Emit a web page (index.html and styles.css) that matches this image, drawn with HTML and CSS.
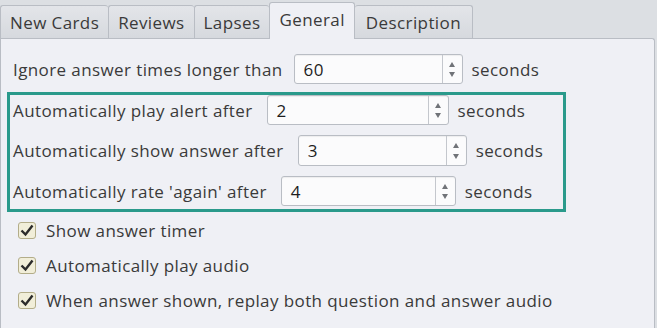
FILE: index.html
```html
<!DOCTYPE html>
<html lang="en">
<head>
    <meta charset="UTF-8">
    <title>Options</title>
    <link rel="stylesheet" href="styles.css">
</head>
<body>
    <div class="tabs">
        <div class="tab">New Cards</div>
        <div class="tab">Reviews</div>
        <div class="tab">Lapses</div>
        <div class="tab active">General</div>
        <div class="tab wide">Description</div>
    </div>

    <div class="pane">
        <div class="row first">
            <span class="label">Ignore answer times longer than</span>
            <div class="spin w169">
                <span class="value">60</span>
                <span class="arrows"><i class="up"></i><i class="down"></i></span>
            </div>
            <span class="unit">seconds</span>
        </div>

        <div class="auto-box">
            <div class="row">
                <span class="label">Automatically play alert after</span>
                <div class="spin w182">
                    <span class="value">2</span>
                    <span class="arrows"><i class="up"></i><i class="down"></i></span>
                </div>
                <span class="unit">seconds</span>
            </div>
            <div class="row">
                <span class="label">Automatically show answer after</span>
                <div class="spin w169">
                    <span class="value">3</span>
                    <span class="arrows"><i class="up"></i><i class="down"></i></span>
                </div>
                <span class="unit">seconds</span>
            </div>
            <div class="row">
                <span class="label">Automatically rate 'again' after</span>
                <div class="spin w175">
                    <span class="value">4</span>
                    <span class="arrows"><i class="up"></i><i class="down"></i></span>
                </div>
                <span class="unit">seconds</span>
            </div>
        </div>

        <div class="checks">
            <label class="check">
                <span class="box"><svg viewBox="0 0 18 17" width="18" height="17"><path d="M3.5 8.5 L7.5 12.5 L14.5 3.5" fill="none" stroke="#2b2b2b" stroke-width="2.4"/></svg></span>
                Show answer timer
            </label>
            <label class="check">
                <span class="box"><svg viewBox="0 0 18 17" width="18" height="17"><path d="M3.5 8.5 L7.5 12.5 L14.5 3.5" fill="none" stroke="#2b2b2b" stroke-width="2.4"/></svg></span>
                Automatically play audio
            </label>
            <label class="check">
                <span class="box"><svg viewBox="0 0 18 17" width="18" height="17"><path d="M3.5 8.5 L7.5 12.5 L14.5 3.5" fill="none" stroke="#2b2b2b" stroke-width="2.4"/></svg></span>
                When answer shown, replay both question and answer audio
            </label>
        </div>
    </div>
</body>
</html>
```

FILE: styles.css
```css
* {
    margin: 0;
    padding: 0;
    box-sizing: border-box;
}

html, body {
    height: 100vh;
    overflow: hidden;
}

body {
    background: #dcdfe3;
    font-family: "Open Sans", "DejaVu Sans", sans-serif;
    font-size: 17px;
    letter-spacing: 0.4px;
    color: #3a3a3a;
}

.tabs {
    display: flex;
    align-items: flex-end;
    height: 39px;
    position: relative;
    z-index: 2;
}

.tab {
    height: 33px;
    padding: 0 9px;
    display: flex;
    align-items: center;
    border: 1px solid #b9bdc4;
    border-bottom: none;
    border-right: none;
    border-radius: 3px 3px 0 0;
    background: linear-gradient(to bottom, #e3e5e9, #d6d9de);
    margin-bottom: 1px;
}

.tab.wide {
    padding: 0 11px;
}

.tab:last-child {
    border-right: 1px solid #b9bdc4;
}

.tab.active {
    height: 37px;
    margin-bottom: 0;
    background: #eff0f5;
    border-right: 1px solid #b9bdc4;
    margin-right: -1px;
    padding-bottom: 3px;
}

.tab.active + .tab {
    border-left: none;
    margin-left: 1px;
}

.pane {
    margin-top: -1px;
    height: calc(100vh - 38px);
    width: 655px;
    background: #eff0f5;
    border: 1px solid #b9bdc4;
    border-bottom: none;
    border-radius: 0 3px 0 0;
    padding: 15px 0 0 6px;
}

.row {
    display: flex;
    align-items: center;
    height: 30px;
}

.row.first {
    padding-left: 6px;
}

.label {
    margin-right: 11px;
}

.auto-box .label {
    margin-right: 14px;
}

.spin {
    height: 30px;
    display: flex;
    background: #fbfbfc;
    border: 1px solid #b9bdc4;
    border-radius: 3px;
    box-shadow: inset 0 1px 1px rgba(0, 0, 0, 0.06);
    margin-right: 9px;
}

.w169 { width: 169px; }
.w175 { width: 175px; }
.w182 { width: 182px; }

.spin .value {
    flex: 1;
    display: flex;
    align-items: center;
    padding-left: 9px;
    color: #1e1e1e;
}

.arrows {
    width: 20px;
    border-left: 1px solid #c4c7cd;
    display: flex;
    flex-direction: column;
    align-items: center;
    justify-content: space-between;
    padding: 7px 0 6px;
}

.arrows i {
    width: 0;
    height: 0;
    border-left: 3px solid transparent;
    border-right: 3px solid transparent;
}

.arrows .up {
    border-bottom: 5px solid #707378;
}

.arrows .down {
    border-top: 5px solid #707378;
}

.auto-box {
    margin-top: 8px;
    width: 559px;
    border: 3px solid #2a9a8b;
    padding: 0 0 3px 3px;
    display: flex;
    flex-direction: column;
    gap: 10px;
}

.auto-box .row:nth-child(2) {
    height: 31px;
}

.auto-box .row:nth-child(2) .spin {
    height: 31px;
}

.checks {
    display: flex;
    flex-direction: column;
    gap: 17px;
    padding: 9px 0 0 11px;
}

.check {
    display: flex;
    align-items: center;
    gap: 10px;
    height: 18px;
}

.box {
    width: 18px;
    height: 17px;
    border: 1px solid #b3ad89;
    border-radius: 3px;
    background: #f1eed9;
    display: flex;
}

.box svg {
    margin: -1px;
}
```
